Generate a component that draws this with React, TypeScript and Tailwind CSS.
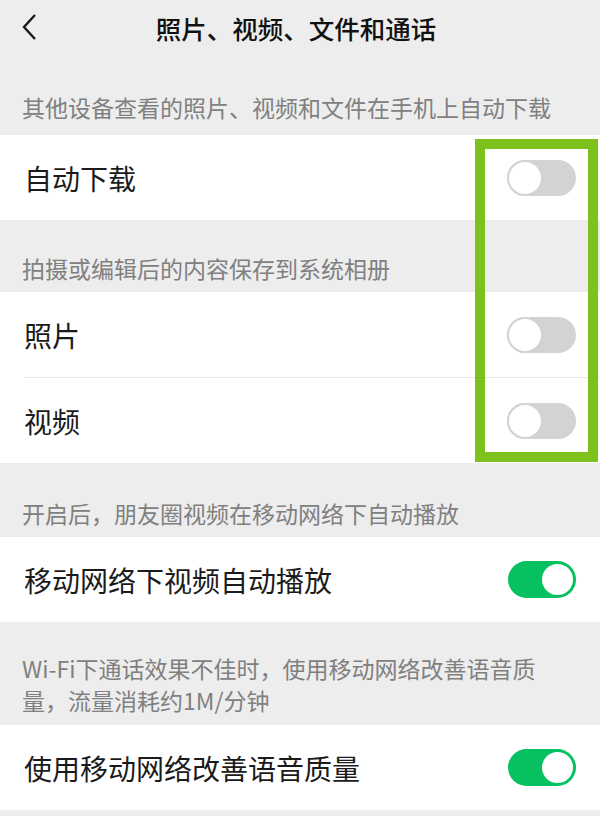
import React from "react";

const font = { fontFamily: '"Noto Sans CJK SC", "Noto Sans", sans-serif' };

function Toggle({ on }: { on?: boolean }) {
  if (on) {
    return (
      <div className="w-[68px] h-[37px] rounded-full bg-[#07c160] flex items-center justify-end pr-[3px]">
        <div className="w-[31px] h-[31px] rounded-full bg-white" />
      </div>
    );
  }
  return (
    <div className="w-[69px] h-[36px] rounded-full bg-[#d3d3d3] flex items-center">
      <div className="w-[36px] h-[36px] rounded-full bg-white border-[2px] border-[#d3d3d3]" />
    </div>
  );
}

function Caption({ children, className }: { children: React.ReactNode; className: string }) {
  return (
    <div className={`px-[22px] text-[23px] leading-[32px] text-[#808080] ${className}`}>{children}</div>
  );
}

function Row({ label, on }: { label: string; on?: boolean }) {
  return (
    <div className="h-[85px] bg-white flex items-center justify-between pl-[24px] pr-[24px]">
      <span className="text-[28px] text-[#1b1b1b]">{label}</span>
      <Toggle on={on} />
    </div>
  );
}

export default function App() {
  return (
    <div className="relative w-[600px] h-[816px] bg-[#ededed] overflow-hidden" style={font}>
      {/* Top bar */}
      <header className="h-[57px] flex items-center relative">
        <svg className="absolute left-[20px] top-[13px]" width="18" height="28" viewBox="0 0 18 28" fill="none">
          <polyline points="15,2 4,14 15,26" stroke="#1a1a1a" strokeWidth="2.4" strokeLinejoin="miter" />
        </svg>
        <h1 className="w-full text-center text-[25.5px] font-medium text-[#111] pr-[8px]">照片、视频、文件和通话</h1>
      </header>

      <Caption className="pt-[34px] pb-[12px]">其他设备查看的照片、视频和文件在手机上自动下载</Caption>
      <Row label="自动下载" />

      <Caption className="pt-[32px] pb-[8px]">拍摄或编辑后的内容保存到系统相册</Caption>
      <div className="bg-white">
        <Row label="照片" />
        <div className="ml-[24px] h-px bg-[#e6e6e6]" />
        <Row label="视频" />
      </div>

      <Caption className="pt-[34px] pb-[8px]">开启后，朋友圈视频在移动网络下自动播放</Caption>
      <Row label="移动网络下视频自动播放" on />

      <Caption className="pt-[30px] pb-[9px]">
        Wi-Fi下通话效果不佳时，使用移动网络改善语音质
        <br />
        量，流量消耗约1M/分钟
      </Caption>
      <Row label="使用移动网络改善语音质量" on />

      {/* annotation highlight */}
      <div className="absolute left-[475px] top-[139px] w-[123px] h-[323px] border-[10px] border-[#7cc11c]" />
    </div>
  );
}
